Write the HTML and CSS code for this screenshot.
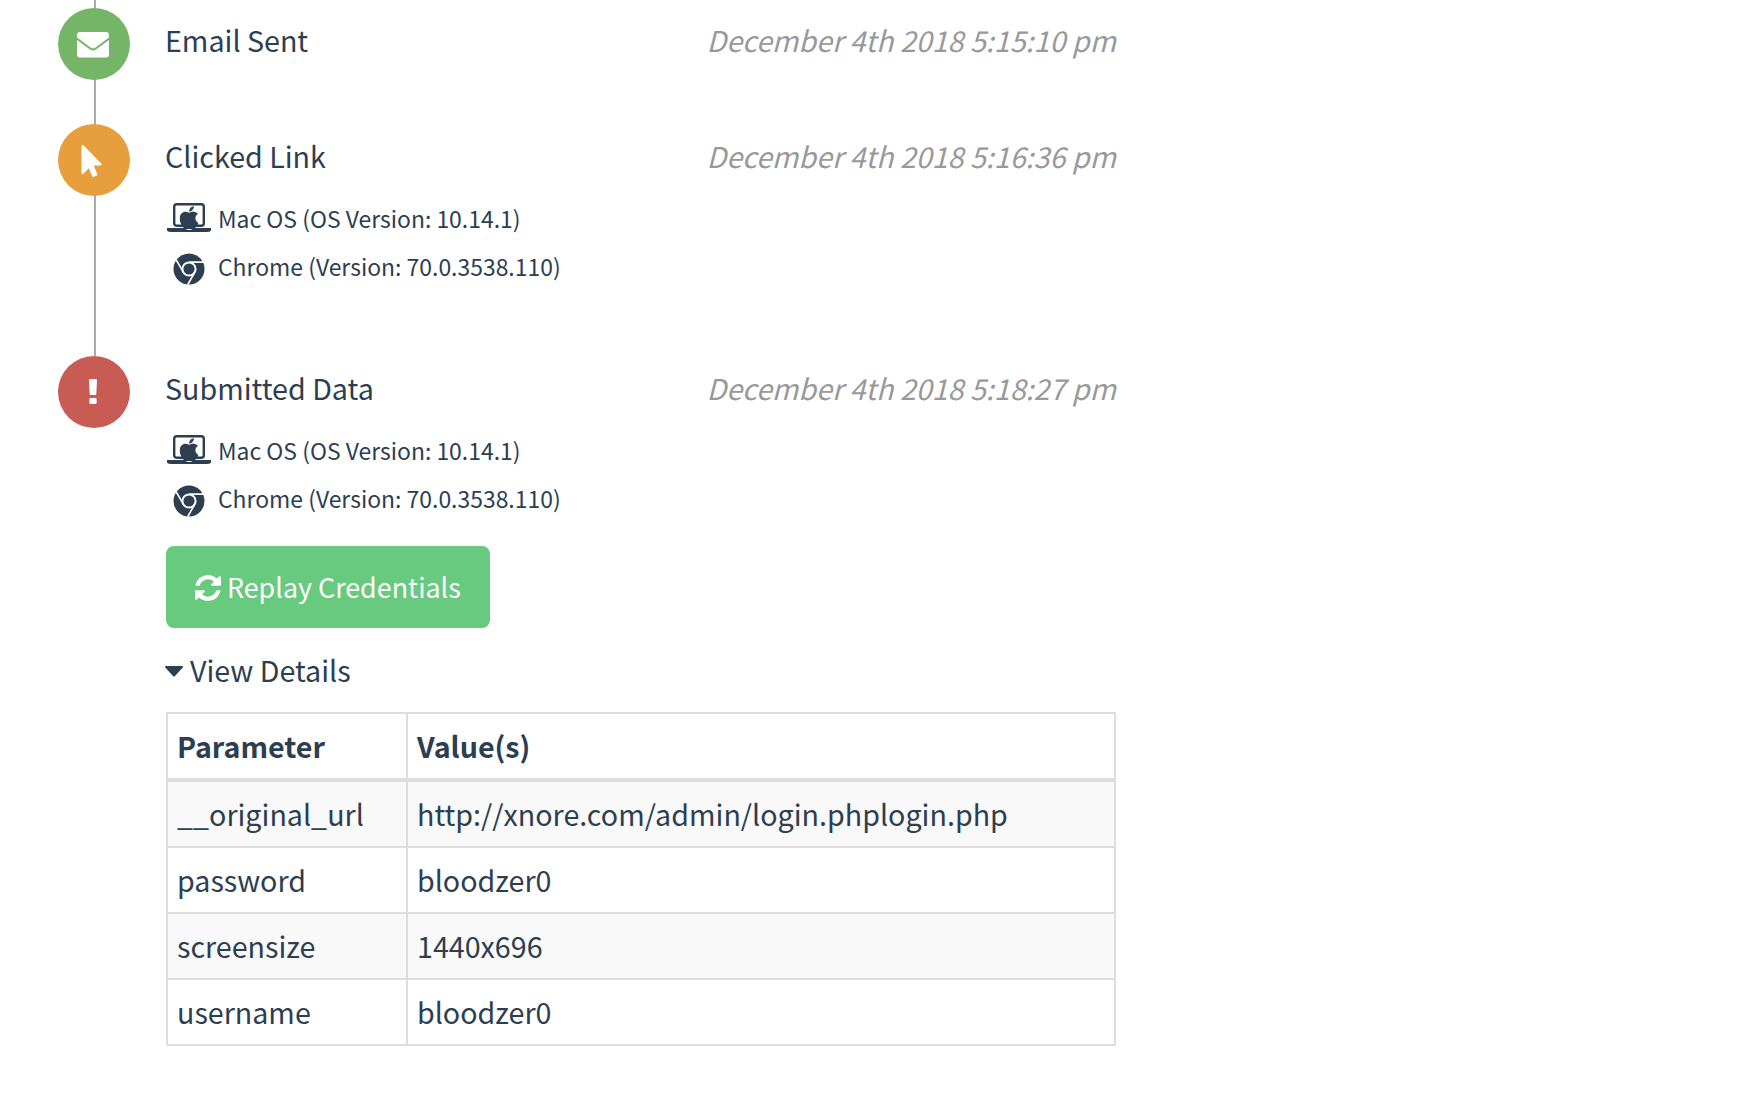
FILE: index.html
```html
<!DOCTYPE html>
<html lang="en">
<head>
<meta charset="utf-8">
<title>Timeline</title>
<link rel="stylesheet" href="styles.css">
</head>
<body>
<svg width="0" height="0" class="sprite">
  <symbol id="laptop" viewBox="0 0 44 30">
    <rect x="7.2" y="1.2" width="29.6" height="21.6" rx="2.6" fill="none" stroke="currentColor" stroke-width="2.400"/>
    <path d="M0 25h44v1.8Q44 29 40 29H4Q0 29 0 26.800Z"/>
    <rect x="19.500" y="26" width="5" height="1" fill="#fff"/>
    <svg x="12.500" y="3" width="19" height="23" viewBox="0 28 380 455" preserveAspectRatio="none"><path d="M318.700 268.700c-.2-36.700 16.400-64.400 50-84.800-18.800-26.900-47.200-41.700-84.700-44.600-35.500-2.800-74.300 20.700-88.500 20.700-15 0-49.400-19.700-76.400-19.700C63.300 141.200 4 184.800 4 273.500q0 39.300 14.400 81.200c12.800 36.700 59 126.700 107.200 125.200 25.200-.6 43-17.900 75.800-17.900 31.800 0 48.300 17.900 76.400 17.900 48.600-.7 90.400-82.500 102.600-119.300-65.200-30.700-61.700-90-61.700-91.900zm-56.600-164.200c27.300-32.400 24.800-61.900 24-72.500-24.100 1.400-52 16.400-67.900 34.900-17.500 19.800-27.800 44.300-25.600 71.900 26.100 2 49.900-11.400 69.500-34.300z"/></svg>
  </symbol>
  <symbol id="chrome" viewBox="0 0 32 32">
    <circle cx="16" cy="16" r="15.500"/>
    <g fill="none" stroke="#fff" stroke-width="2">
      <circle cx="16" cy="16" r="6.600"/>
      <path stroke-width="1.600" d="M16 9.100H30.500M10.300 19.200L3 6.500M21.600 19.500L14.800 31.500"/>
    </g>
  </symbol>
</svg>
<main class="timeline">
  <section class="event sent">
    <div class="badge green"><svg class="envelope" viewBox="0 0 32 26"><path d="M3 0H29Q32 0 32 3V5.500L18.500 15.500Q16 17.200 13.500 15.500L0 5.500V3Q0 0 3 0ZM0 8L13 17.500Q16 19.400 19 17.500L32 8V22.500Q32 25.500 29 25.500H3Q0 25.500 0 22.500Z"/></svg></div>
    <div class="body"><header><span class="name">Email Sent</span><time>December 4th 2018 5:15:10 pm</time></header></div>
  </section>
  <section class="event clicked">
    <div class="badge orange"><svg class="pointer" viewBox="0 0 320 512"><path d="M302.189 329.126H196.105l55.831 135.993c3.889 9.428-.555 19.999-9.444 23.999l-49.165 21.427c-9.165 4-19.443-.571-23.332-9.714l-53.053-129.136-86.664 89.138C18.729 472.710 0 463.554 0 447.977V18.299C0 1.899 19.921-6.096 30.277 5.443l284.412 292.542c11.472 11.179 3.007 31.141-12.500 31.141z"/></svg></div>
    <div class="body"><header><span class="name">Clicked Link</span><time>December 4th 2018 5:16:36 pm</time></header>
      <div class="device"><svg class="laptop"><use href="#laptop"/></svg><span>Mac OS (OS Version: 10.14.1)</span></div>
      <div class="device"><svg class="chrome"><use href="#chrome"/></svg><span>Chrome (Version: 70.0.3538.110)</span></div>
    </div>
  </section>
  <section class="event submitted">
    <div class="badge red"><svg class="bang" viewBox="0 0 8 26"><path d="M1 0H7Q8 0 8 1L7.300 15Q7.200 16 6.300 16H1.700Q.8 16 .7 15L0 1Q0 0 1 0ZM1.400 19H6.600Q7.600 19 7.600 20V24Q7.600 25 6.600 25H1.400Q.4 25 .4 24V20Q.4 19 1.400 19Z"/></svg></div>
    <div class="body"><header><span class="name">Submitted Data</span><time>December 4th 2018 5:18:27 pm</time></header>
      <div class="device"><svg class="laptop"><use href="#laptop"/></svg><span>Mac OS (OS Version: 10.14.1)</span></div>
      <div class="device"><svg class="chrome"><use href="#chrome"/></svg><span>Chrome (Version: 70.0.3538.110)</span></div>
      <button class="replay"><svg viewBox="128 128 1536 1536"><path d="M1639 1056q0 5-1 7-64 268-268 434.500t-478 166.500q-146 0-282.500-55t-243.500-157l-129 129q-19 19-45 19t-45-19-19-45v-448q0-26 19-45t45-19h448q26 0 45 19t19 45-19 45l-137 137q71 66 161 102t187 36q134 0 250-65t186-179q11-17 53-117 8-23 30-23h192q13 0 22.500 9.500t9.500 22.500zm25-800v448q0 26-19 45t-45 19h-448q-26 0-45-19t-19-45 19-45l138-138q-148-137-349-137-134 0-250 65t-186 179q-11 17-53 117-8 23-30 23h-199q-13 0-22.500-9.500t-9.500-22.500v-7q65-268 270-434.500t480-166.500q146 0 284 55.500t245 156.500l130-129q19-19 45-19t45 19 19 45z"/></svg><span>Replay Credentials</span></button>
      <div class="details"><svg viewBox="0 0 18 11"><path d="M1 0H17Q18.500.5 17.500 1.800L10 10Q9 11 8 10L.5 1.800Q-.5.5 1 0Z"/></svg><span>View Details</span></div>
      <table>
        <thead><tr><th class="key">Parameter</th><th>Value(s)</th></tr></thead>
        <tbody>
          <tr><td>__original_url</td><td>http://xnore.com/admin/login.phplogin.php</td></tr>
          <tr><td>password</td><td>bloodzer0</td></tr>
          <tr><td>screensize</td><td>1440x696</td></tr>
          <tr><td>username</td><td>bloodzer0</td></tr>
        </tbody>
      </table>
    </div>
  </section>
</main>
</body>
</html>
```
FILE: styles.css
```css
* { box-sizing: border-box; }
body {
  margin: 0;
  height: 1112px;
  overflow: hidden;
  background: #fff;
  color: #2c3e50;
  font: 28.650px/42px "Noto Sans CJK SC", sans-serif;
}
svg { display: block; fill: currentColor; flex: none; }
.sprite { position: absolute; }
.timeline { width: 1116px; padding-left: 58px; }
.event { display: flex; gap: 36px; }
.sent {
  height: 124px;
  padding-top: 8px;
  background: linear-gradient(#aaa, #aaa) 36px 0 / 2px 100% no-repeat;
}
.clicked {
  height: 232px;
  background: linear-gradient(#aaa, #aaa) 36px 0 / 2px 100% no-repeat;
}
.badge {
  display: flex;
  flex: none;
  align-items: center;
  justify-content: center;
  width: 72px;
  height: 72px;
  border-radius: 50%;
  color: #fff;
}
.green { background: #75b568; }
.orange { background: #e69f3c; }
.red { background: #c85b54; }
.envelope { width: 32px; height: 26px; margin: 2px 2px 0 0; }
.pointer { width: 21px; height: 32px; margin: 1px 5px 0 0; }
.bang { width: 8px; height: 26px; margin: 0 2px 1px 0; }
.body { flex: 1; }
header { display: flex; justify-content: space-between; height: 71px; padding-top: 11px; }
.name { margin-left: -1px; }
time { color: #999; font-style: italic; }
.device { display: flex; align-items: center; height: 48px; font-size: 22.930px; }
.device span { margin-top: -3px; }
.laptop { width: 44px; height: 30px; margin: -2px 7px 0 1px; }
.chrome { width: 32px; height: 32px; margin: 3px 13px 0 7px; }
.replay {
  display: flex;
  align-items: center;
  gap: 6px;
  width: 324px;
  height: 82px;
  margin-top: 23px;
  padding: 0 0 0 29px;
  border: 0;
  border-radius: 8px;
  background: #68ca7e;
  color: #fff;
  font: inherit;
  font-size: 26.850px;
  white-space: nowrap;
}
.replay svg { width: 26px; height: 26px; margin-top: 2px; }
.details { display: flex; align-items: center; height: 84px; gap: 7px; }
.details svg { width: 18px; height: 11px; margin: 3px 0 0 -1px; }
table {
  width: 950px;
  border-collapse: separate;
  border-spacing: 0;
  border: solid #ddd;
  border-width: 2px 0 0 2px;
  table-layout: fixed;
}
th, td {
  height: 66px;
  padding: 0 9px;
  border: solid #ddd;
  border-width: 0 2px 2px 0;
  text-align: left;
  white-space: nowrap;
}
th { height: 68px; border-bottom-width: 4px; font-weight: 700; }
.key { width: 240px; }
tbody tr:nth-child(odd) { background: #f9f9f9; }
```
